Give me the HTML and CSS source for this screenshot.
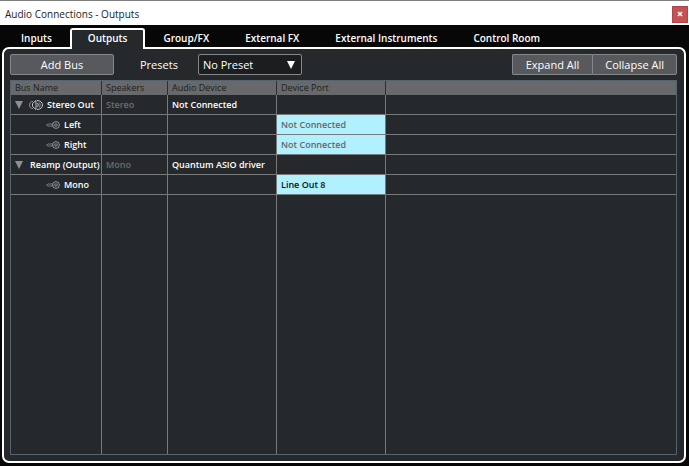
FILE: index.html
```html
<!DOCTYPE html>
<html lang="en">
<head>
	<meta charset="UTF-8">
	<title>Audio Connections - Outputs</title>
	<link rel="stylesheet" href="styles.css">
</head>
<body>
	<svg width="0" height="0" class="defs" aria-hidden="true">
		<symbol id="icon-plug" viewBox="0 0 14 8">
			<path d="M7 3H2L.5 4 2 5h5" fill="none" stroke="#8d8f90" stroke-width=".8"/>
			<circle cx="10" cy="4" r="3.4" fill="none" stroke="#a0a2a3" stroke-width=".9"/>
			<circle cx="10" cy="4" r="1.3" fill="none" stroke="#a0a2a3" stroke-width=".8"/>
		</symbol>
		<symbol id="icon-stereo" viewBox="0 0 14 10">
			<path d="M4 1.500H2.500Q.5 2.500.5 5t2 3.500H4" fill="none" stroke="#8d8f90"/>
			<path d="M3.500 3.500v3L7 9.500V.5z" fill="none" stroke="#c4c6c7"/>
			<path d="M8.500 3a3 3 0 0 1 0 4M8 .5q5.500.5 5.500 4.500T8 9.500" fill="none" stroke="#c4c6c7"/>
			<path d="M10.500 2.500q1.500 2.500 0 5" fill="none" stroke="#8d8f90"/>
		</symbol>
	</svg>
	<div class="titlebar">
		<h1>Audio Connections - Outputs</h1>
		<button type="button" class="close" aria-label="Close">
			<svg width="6" height="6" viewBox="0 0 6 6"><path d="M1 1l4 4M5 1L1 5" stroke="#fff" stroke-width="1.6"/></svg>
		</button>
	</div>
	<nav class="tabs">
		<a href="#inputs">Inputs</a>
		<a href="#outputs" class="active">Outputs</a>
		<a href="#group">Group/FX</a>
		<a href="#fx">External FX</a>
		<a href="#instruments">External Instruments</a>
		<a href="#room">Control Room</a>
	</nav>
	<main class="panel" id="outputs">
		<div class="toolbar">
			<button type="button" class="btn add">Add Bus</button>
			<label for="presets">Presets</label>
			<div class="dropdown">
				<select id="presets">
					<option>No Preset</option>
				</select>
				<svg width="8" height="8" viewBox="0 0 8 8"><path d="M0 0h8L4 8z" fill="#fff"/></svg>
			</div>
			<div class="btn-group">
				<button type="button" class="btn">Expand All</button>
				<button type="button" class="btn">Collapse All</button>
			</div>
		</div>
		<div class="bus-list">
			<table>
				<colgroup>
					<col class="col-name">
					<col class="col-speakers">
					<col class="col-device">
					<col class="col-port">
					<col>
				</colgroup>
				<thead>
					<tr>
						<th>Bus Name</th>
						<th>Speakers</th>
						<th>Audio Device</th>
						<th>Device Port</th>
						<th></th>
					</tr>
				</thead>
				<tbody>
					<tr>
						<td><div class="name"><svg class="arrow" viewBox="0 0 8 8"><path d="M0 0h8L4 8z"/></svg><svg class="stereo"><use href="#icon-stereo"/></svg>Stereo Out</div></td>
						<td class="dim">Stereo</td>
						<td>Not Connected</td>
						<td></td>
						<td></td>
					</tr>
					<tr>
						<td><div class="name channel"><svg class="plug"><use href="#icon-plug"/></svg>Left</div></td>
						<td></td>
						<td></td>
						<td class="port off">Not Connected</td>
						<td></td>
					</tr>
					<tr>
						<td><div class="name channel"><svg class="plug"><use href="#icon-plug"/></svg>Right</div></td>
						<td></td>
						<td></td>
						<td class="port off">Not Connected</td>
						<td></td>
					</tr>
					<tr>
						<td><div class="name mono"><svg class="arrow" viewBox="0 0 8 8"><path d="M0 0h8L4 8z"/></svg>Reamp (Output)</div></td>
						<td class="dim">Mono</td>
						<td>Quantum ASIO driver</td>
						<td></td>
						<td></td>
					</tr>
					<tr>
						<td><div class="name channel"><svg class="plug"><use href="#icon-plug"/></svg>Mono</div></td>
						<td></td>
						<td></td>
						<td class="port">Line Out 8</td>
						<td></td>
					</tr>
					<tr class="fill">
						<td></td>
						<td></td>
						<td></td>
						<td></td>
						<td></td>
					</tr>
				</tbody>
			</table>
		</div>
	</main>
</body>
</html>
```

FILE: styles.css
```css
*{
	margin:0;
	padding:0;
	box-sizing:border-box;
}
body{
	display:flex;
	flex-direction:column;
	min-height:100vh;
	background-color:#070708;
	color:#fff;
	font-family:"Open Sans","Noto Sans",sans-serif;
	font-size:10px;
}
button,select{
	font:inherit;
	color:inherit;
}
.defs{
	position:absolute;
}
.titlebar{
	display:flex;
	align-items:center;
	justify-content:space-between;
	height:25px;
	padding:2px 1px 0 5px;
	border-top:1px solid #808080;
	background-color:#fff;
	color:#222;
}
.titlebar h1{
	font-size:10px;
	font-weight:400;
}
.close{
	display:flex;
	align-items:center;
	justify-content:center;
	width:16px;
	height:17px;
	border:1px solid #a8484c;
	background-color:#c75050;
}
.tabs{
	position:relative;
	z-index:1;
	display:flex;
	height:24px;
	padding:3px 3px 0;
}
.tabs a{
	padding:0 18px;
	color:#fff;
	font-weight:600;
	line-height:20px;
	text-decoration:none;
}
.tabs .active{
	padding:0 16px;
	border:2px solid #fff;
	border-bottom:0;
	border-radius:3px 3px 0 0;
	background-color:#25292c;
	line-height:16px;
}
.panel{
	flex:1;
	display:flex;
	flex-direction:column;
	gap:5px;
	margin:-2px 3px 3px 2px;
	padding:5px 7px 6px 6px;
	border:2px solid #fff;
	border-radius:7px;
	background-color:#25292c;
}
.toolbar{
	display:flex;
	align-items:center;
	font-size:11px;
}
.btn{
	height:21px;
	padding:0 13px;
	border:1px solid #85888a;
	border-radius:2px;
	background-color:#57595c;
}
.add{
	width:104px;
	margin-right:26px;
}
.dropdown{
	position:relative;
	width:104px;
	margin-left:20px;
}
.dropdown select{
	display:block;
	width:100%;
	height:21px;
	padding-left:4px;
	border:1px solid #85888a;
	border-radius:2px;
	background-color:#1b1d1f;
	appearance:none;
}
.dropdown svg{
	position:absolute;
	top:7px;
	right:7px;
	pointer-events:none;
}
.btn-group{
	display:flex;
	margin-left:auto;
}
.btn-group .btn:first-child{
	border-right:0;
	border-radius:2px 0 0 2px;
}
.btn-group .btn:last-child{
	padding:0 12px;
	border-radius:0 2px 2px 0;
}
.bus-list{
	flex:1;
	display:flex;
	border:1px solid #566270;
}
table{
	width:100%;
	table-layout:fixed;
	border-collapse:separate;
	border-spacing:0;
	font-size:9px;
}
.col-name{
	width:91px;
}
.col-speakers{
	width:66px;
}
.col-device,.col-port{
	width:109px;
}
th{
	height:14px;
	padding:0 4px;
	border-right:1px solid #2c2f31;
	background-color:#67696b;
	color:#1c1e20;
	font-weight:400;
	line-height:14px;
	text-align:left;
}
td{
	height:20px;
	padding:0 4px;
	border-right:1px solid #77797b;
	border-bottom:1px solid #77797b;
	font-weight:600;
	line-height:19px;
	white-space:nowrap;
}
th:last-child,td:last-child{
	border-right:0;
}
.fill td{
	height:auto;
	border-bottom:0;
}
.dim{
	color:#6b6e70;
}
.port{
	background-color:#b0f0ff;
	color:#111;
}
.off{
	color:#666;
}
.name{
	display:flex;
	align-items:center;
	gap:4px;
}
.name svg{
	flex-shrink:0;
}
.channel{
	padding-left:31px;
}
.mono{
	gap:7px;
}
.arrow{
	width:8px;
	height:8px;
	fill:#8d8f90;
}
.stereo{
	width:14px;
	height:10px;
	margin-left:2px;
}
.plug{
	width:14px;
	height:8px;
}
```
